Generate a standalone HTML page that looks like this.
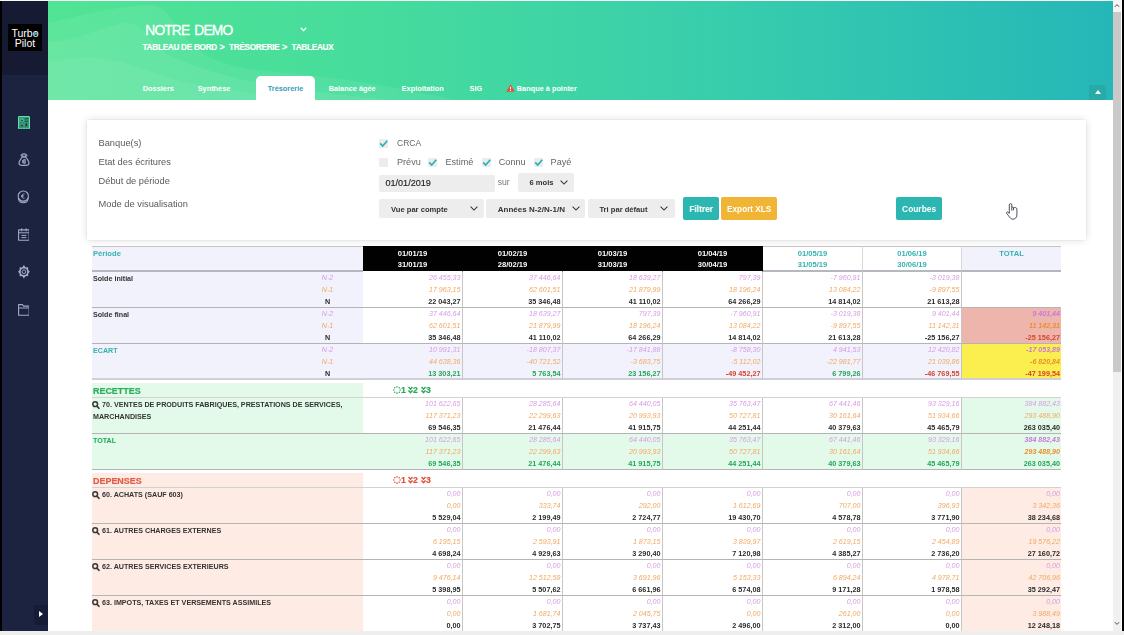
<!DOCTYPE html>
<html lang="fr">
<head>
<meta charset="utf-8">
<title>Turbo Pilot - Trésorerie</title>
<style>
*{box-sizing:border-box}
html,body{margin:0;padding:0}
body{width:1124px;height:635px;overflow:hidden;position:relative;background:#fff;font-family:"Liberation Sans",sans-serif;color:#333}
.abs{position:absolute}
#topline{left:0;top:0;width:1124px;height:1px;background:#fafafa}
#lblack{left:0;top:1px;width:2px;height:630px;background:#000}
#rblack{left:1122px;top:0;width:2px;height:631px;background:#000}
#side{left:2px;top:1px;width:46px;height:630px;background:#1c2340}
#sidetop{left:0;top:0;width:46px;height:74px;background:#171a33}
#logo{left:6px;top:23px;width:34px;height:27px;background:rgba(0,0,0,.997);color:#fff;font-size:10.5px;line-height:10.2px;text-align:center;padding-top:3.8px;letter-spacing:0}
#logo i{font-style:normal;position:relative}
#logo i:after{content:"";position:absolute;left:1.45px;top:5.1px;width:3px;height:3px;border-radius:50%;background:#2eb0e6}
#toggle{left:32px;top:604px;width:14px;height:20px;background:#161b36;border-radius:2px 0 0 2px}
#toggle:after{content:"";position:absolute;left:5px;top:6px;border-left:4px solid #fff;border-top:3.5px solid transparent;border-bottom:3.5px solid transparent}
.sic{position:absolute;left:15px;width:13px;height:14px}
#head{left:48px;top:1px;width:1065px;height:99px;background:linear-gradient(90deg,#51e494 0%,#46dc9c 30%,#3acfab 60%,#2cc0b4 85%,#25b7b7 100%);overflow:hidden}
#head svg.wv{position:absolute;left:0;top:0}
#title{left:97.3px;top:21.6px;font-size:13.8px;font-weight:normal;-webkit-text-stroke:.3px #fff;color:#fff;letter-spacing:-.85px;word-spacing:2px;white-space:nowrap}
#caret{left:252px;top:26px;width:7px;height:5px}
#crumb{left:94.5px;top:42px;line-height:10px;font-size:8.2px;letter-spacing:-.27px;font-weight:bold;color:#fff;-webkit-text-stroke:.15px #fff;white-space:nowrap}
#crumb b{font-weight:bold;font-size:9px;line-height:8px;position:relative;top:.3px;margin:0 2.5px 0 .5px}
.tab{position:absolute;top:83px;font-size:7.35px;font-weight:bold;color:#fff;white-space:nowrap;line-height:10px}
#tabact{left:208px;top:75px;width:59px;height:25px;background:#fff;border-radius:5px 5px 0 0;color:#3a9cbc;text-align:center;padding-top:8px}
#upbtn{left:1041px;top:84px;width:17px;height:15px;background:#28aaa9;border-radius:1px}
#upbtn:after{content:"";position:absolute;left:5.5px;top:5px;border-bottom:4px solid #fff;border-left:3.5px solid transparent;border-right:3.5px solid transparent}
#sb{left:1113px;top:0;width:8px;height:631px;background:#f0f0f0}
#sbthumb{left:0;top:12px;width:8px;height:360px;background:#c9c9c9}
#sbtop{left:0;top:0;width:8px;height:12px;background:#f4f4f4}
#bbar{left:0;top:631px;width:1124px;height:4px;background:#eeeeee}
#panel{left:87px;top:120px;width:999px;height:120px;background:#fff;box-shadow:0 0 9px rgba(0,0,0,.14),0 0 2px rgba(0,0,0,.10)}
.fl{position:absolute;left:11.5px;font-size:9.3px;color:#5a5a5a;white-space:nowrap;line-height:12px}
.cb{position:absolute;width:9px;height:9px;background:#ececec;border-radius:1px}
.cb svg{position:absolute;left:0;top:0;width:9px;height:9px}
.ct{position:absolute;font-size:9.1px;color:#666;white-space:nowrap;line-height:12px}
.inp{position:absolute;background:#ededed;border-radius:2px;font-weight:bold;font-size:7.6px;color:#333;white-space:nowrap}
.inp span{position:absolute}
.inp svg{position:absolute;width:8px;height:5px}
.btn{position:absolute;top:77px;height:23px;border-radius:2px;color:#fff;font-weight:bold;font-size:8.4px;line-height:24.2px;text-align:center;white-space:nowrap}
table{position:absolute;left:92px;top:246px;width:969px;border-collapse:separate;border-spacing:0;table-layout:fixed}
td,th{padding:0;margin:0;vertical-align:top;overflow:hidden}
th{height:26px;border-top:1px solid #c4c4c4;border-bottom:2px solid #b6b8bf;font-size:7.6px;line-height:11.5px;font-weight:bold;text-align:center;padding-top:0;color:#33b2ae;background:#fff;border-right:1px solid #d8d8d8}
th .hi{position:relative;top:.8px}
th.blk{background:#000;color:#fff;border-top-color:#000;border-right-color:#000;border-bottom:1px solid #fff}
th.per{text-align:left;padding-left:1px;background:#f1f2fb;border-right:none}
th.tt{background:#f1f2fb;border-right:none}
tr.dr td{height:36px;border-bottom:1px solid #b4b4b4}
td.lbl{font-size:7.15px;font-weight:bold;color:#333;line-height:12px;padding:1.3px 0 0 1px;white-space:nowrap}
td.nn{text-align:center;font-size:7.2px;line-height:11.85px;padding-top:.5px}
td.num{text-align:right;font-size:7.25px;line-height:11.85px;padding-right:1.5px;padding-top:.5px;border-right:1px solid #c6c6c6;white-space:nowrap}
td.num.tot{border-right:none;padding-right:1px}
.v2{font-style:italic;font-size:7.1px;color:#d79be4;height:12.4px}
.v1{font-style:italic;font-size:7.1px;color:#f0a961;height:11.3px}
.v0{font-weight:bold;color:#2b2b2b;height:10.8px}
.r-ec .v0{height:9.8px}
.pos{color:#1fa857}
.neg{color:#d8432e}
.r-si td.lbl,.r-si td.nn,.r-sf td.lbl,.r-sf td.nn{background:#f1f2fb}
.r-ec td{background:#f1f2fb}
tr.r-ec td{border-bottom:2px solid #cfcfd5}
td.lbl-teal{color:#33b2ae}
td.lbl-green{color:#1fa857}
td.t-sf{background:#eeb5ad}
.r-ec td.t-ec{background:#fbee4f}
td.tot .v2,td.tot .v1{font-weight:normal}
td.t-sf .v2,td.t-sf .v1,td.t-ec .v2,td.t-ec .v1,.g-tot td.tot .v2,.g-tot td.tot .v1{font-weight:bold}
td.t-sf .v2,td.t-ec .v2,.g-tot td.tot .v2{color:#c978dc}
td.t-sf .v1,td.t-ec .v1,.g-tot td.tot .v1{color:#ea8f2f}
tr.sec td{height:15px;border-bottom:1px solid #d2d2d2;font-weight:bold;font-size:8.7px;line-height:13px}
tr.sec td.lbl{font-size:8.95px;line-height:11px;padding-top:2.5px;-webkit-text-stroke:.2px}
tr.gap td{height:3px}
.s-rec td.lbl{background:#e3f9e9;color:#2aae5c}
.s-dep td.lbl{background:#fdebe4;color:#e15e47}
.s-rec td.ic{color:#2aa95a}
.s-dep td.ic{color:#e0523c}
td.ic{padding-left:30px;font-size:8.7px;white-space:nowrap}
.icw{position:relative;top:1.2px;display:inline-block;-webkit-text-stroke:.2px}
td.ic svg{vertical-align:-1.2px}
svg.spn{width:8px;height:8px}
svg.chv{width:5px;height:8px}
.g-rec td.lbl,.g-rec td.tot,.g-tot td{background:#e3f9e9}
.g-rec td{border-bottom-color:#a9c4b0}
.g-dep td.lbl,.g-dep td.tot{background:#fdebe4}
svg.mag{width:8px;height:8.5px;vertical-align:-2.6px;margin-left:-.8px;margin-right:-.2px}
#cursor{left:1006px;top:202.5px;width:12px;height:17px}
</style>
</head>
<body style="opacity:.999">
<div id="topline" class="abs"></div>
<div id="lblack" class="abs"></div>
<div id="rblack" class="abs"></div>

<div id="side" class="abs">
  <div id="sidetop" class="abs"></div>
  <div id="logo" class="abs">Turb<i>o</i><br>Pilot</div>

  <svg class="sic" style="left:15.6px;top:114.6px;width:12px;height:13.5px" viewBox="0 0 12 13.5"><rect x=".5" y=".5" width="11" height="12.5" rx=".3" fill="#46cf95" fill-opacity=".68" stroke="#5fe3a8" stroke-width="1"/><ellipse cx="4" cy="4.5" rx="1.25" ry="1.6" fill="#1c2340" fill-opacity=".9" stroke="#5fe3a8" stroke-width=".8"/><path d="M6.7 3.1 L10.3 2.6 M6.7 5.3 H10.2" stroke="#1c2340" stroke-opacity=".8" stroke-width=".9"/><rect x="7.5" y="7.3" width="1.6" height="3" fill="#1c2340" fill-opacity=".9"/><path d="M2.6 9.7 H5" stroke="#1c2340" stroke-opacity=".8" stroke-width="1.2"/><path d="M2.2 6.5 H5.6" stroke="#1c2340" stroke-opacity=".35" stroke-width=".7"/></svg>
  <svg class="sic" style="left:15.7px;top:151.8px;width:12px;height:13.2px" viewBox="0 0 13 14"><path d="M4.9 4 C2.8 6.4 1.1 8.8 1.1 10.8 C1.1 12.5 2.2 13.2 3.6 13.2 H9.4 C10.8 13.2 11.9 12.5 11.9 10.8 C11.9 8.8 10.2 6.4 8.1 4 Z" fill="none" stroke="#a3a9c6" stroke-width="1.25"/><path d="M3.2 2.5 C3.2 1.3 4.6 .7 6.5 .7 C8.4 .7 9.8 1.3 9.8 2.5 C9.8 3.5 8.6 3.9 6.5 3.9 C4.4 3.9 3.2 3.5 3.2 2.5 Z" fill="#a3a9c6" fill-opacity=".75" stroke="#a3a9c6" stroke-width=".9"/><ellipse cx="6.5" cy="2.4" rx=".8" ry="1" fill="#1c2340"/><path d="M7.9 6.9 C6.3 6.3 5 7.6 5 9.1 C5 10.6 6.3 11.7 7.9 11.2 Z M4.3 8.5 H6.8 M4.3 9.7 H6.8" fill="#a3a9c6" fill-opacity=".55" stroke="#a3a9c6" stroke-width=".9"/></svg>
  <svg class="sic" style="left:15.3px;top:189px;width:12.6px;height:13.6px" viewBox="0 0 13 14"><circle cx="6.5" cy="6.3" r="5.3" fill="none" stroke="#a3a9c6" stroke-width="1.15"/><path d="M1.3 8 C1.6 11.4 3.6 13.2 6.5 13.2 C9.4 13.2 11.4 11.4 11.7 8" fill="none" stroke="#a3a9c6" stroke-width="1.1"/><path d="M4.6 11.6 H8.4" stroke="#a3a9c6" stroke-width=".8"/><path d="M7.8 4.2 C6.2 3.6 5 4.8 5 6.3 C5 7.8 6.2 9 7.8 8.4 M4.2 5.7 H6.8 M4.2 6.9 H6.8" fill="none" stroke="#a3a9c6" stroke-width=".9"/></svg>
  <svg class="sic" style="left:15.7px;top:227.2px;width:11.8px;height:12.8px" viewBox="0 0 11.8 12.8"><rect x=".6" y="1.9" width="10.6" height="10.3" rx=".3" fill="none" stroke="#a3a9c6" stroke-width="1.1"/><path d="M.6 4.8 H11.2 M3.7 .3 V3.4 M8.1 .3 V3.4" stroke="#a3a9c6" stroke-width="1"/><path d="M3.4 7.4 H8.4 M3.4 9.6 H8.4" stroke="#a3a9c6" stroke-width="1"/></svg>
  <svg class="sic" style="left:15.8px;top:264px;width:11.8px;height:13.5px" viewBox="0 0 11.8 13.5"><path d="M5.90 0.05 L7.70 2.41 L10.07 2.30 L10.24 4.95 L11.80 6.75 L10.24 8.55 L10.07 11.20 L7.70 11.09 L5.90 13.45 L4.10 11.09 L1.73 11.20 L1.56 8.55 L0.00 6.75 L1.56 4.95 L1.73 2.30 L4.10 2.41 Z" fill="#a3a9c6"/><circle cx="5.9" cy="6.75" r="3.2" fill="#1c2340"/><circle cx="5.9" cy="6.75" r="1.8" fill="none" stroke="#a3a9c6" stroke-width="1"/></svg>
  <svg class="sic" style="left:15.7px;top:302.8px;width:11.8px;height:11.8px" viewBox="0 0 11.8 11.8"><path d="M.6 11.2 V.6 H4.4 L5.6 2.1 H11.2 V11.2 Z" fill="none" stroke="#a3a9c6" stroke-width="1.1" stroke-linejoin="round"/><path d="M.6 4 H11.2" stroke="#a3a9c6" stroke-width="1"/></svg>

  <div id="toggle" class="abs"></div>
</div>

<div id="head" class="abs">
  <svg class="wv" width="1065" height="99" viewBox="0 0 1065 99">
    <path d="M0 22 C20 18 60 6 100 4 C115 3 121 14 128 24 C140 40 150 52 170 60 C195 69 220 70 260 74 C320 80 360 90 410 99 L0 99 Z" fill="#fff" fill-opacity=".07"/>
    <path d="M0 41 C30 39 50 28 75 22 C90 19 100 35 110 46 C125 60 160 70 200 80 C240 88 290 93 340 99 L0 99 Z" fill="#fff" fill-opacity=".07"/>
    <path d="M0 60 C20 58 40 54 60 58 C90 64 110 76 150 84 C200 92 230 96 270 99 L0 99 Z" fill="#fff" fill-opacity=".06"/>
  </svg>
  <div id="title" class="abs">NOTRE DEMO</div>
  <svg id="caret" class="abs" viewBox="0 0 7 5"><path d="M0.8 0.8 L3.5 3.6 L6.2 0.8" fill="none" stroke="#fff" stroke-width="1.3"/></svg>
  <div id="crumb" class="abs">TABLEAU DE BORD <b>&gt;</b> TRÉSORERIE <b>&gt;</b> TABLEAUX</div>
  <div class="tab" style="left:94.8px">Dossiers</div>
  <div class="tab" style="left:149.7px">Synthèse</div>
  <div id="tabact" class="tab" style="top:75px">Trésorerie</div>
  <div class="tab" style="left:280.7px">Balance âgée</div>
  <div class="tab" style="left:353.7px">Exploitation</div>
  <div class="tab" style="left:421.5px">SIG</div>
  <svg class="abs" style="left:458px;top:83px;width:9px;height:8px" viewBox="0 0 9 8"><path d="M4.5 0.3 L8.8 7.7 L0.2 7.7 Z" fill="#e8503c"/><path d="M4.5 2.8 L4.5 5.2" stroke="#fff" stroke-width="1"/><circle cx="4.5" cy="6.4" r=".55" fill="#fff"/></svg>
  <div class="tab" style="left:468.8px">Banque à pointer</div>
  <div id="upbtn" class="abs"></div>
</div>

<div id="panel" class="abs">
  <div class="fl" style="top:17px">Banque(s)</div>
  <div class="fl" style="top:36px">Etat des écritures</div>
  <div class="fl" style="top:55px">Début de période</div>
  <div class="fl" style="top:77.5px">Mode de visualisation</div>

  <div class="cb" style="left:292px;top:19px"><svg viewBox="0 0 9 9"><path d="M1.2 4.3 L3.7 7 L8.3 1.8" fill="none" stroke="#2ab3b3" stroke-width="1.7"/></svg></div>
  <div class="ct" style="left:310px;top:17px;font-size:8.5px">CRCA</div>

  <div class="cb" style="left:292px;top:38px"></div>
  <div class="ct" style="left:310px;top:36px">Prévu</div>
  <div class="cb" style="left:341px;top:38px"><svg viewBox="0 0 9 9"><path d="M1.2 4.3 L3.7 7 L8.3 1.8" fill="none" stroke="#2ab3b3" stroke-width="1.7"/></svg></div>
  <div class="ct" style="left:358.5px;top:36px">Estimé</div>
  <div class="cb" style="left:394.5px;top:38px"><svg viewBox="0 0 9 9"><path d="M1.2 4.3 L3.7 7 L8.3 1.8" fill="none" stroke="#2ab3b3" stroke-width="1.7"/></svg></div>
  <div class="ct" style="left:411.8px;top:36px">Connu</div>
  <div class="cb" style="left:446.7px;top:38px"><svg viewBox="0 0 9 9"><path d="M1.2 4.3 L3.7 7 L8.3 1.8" fill="none" stroke="#2ab3b3" stroke-width="1.7"/></svg></div>
  <div class="ct" style="left:463.6px;top:36px">Payé</div>

  <div class="inp" style="left:292px;top:54.6px;width:116px;height:17.1px;font-weight:normal;font-size:9.1px;color:#222;-webkit-text-stroke:.15px #222"><span style="left:6.4px;top:3.2px">01/01/2019</span></div>
  <div class="ct" style="left:410.8px;top:55.7px;font-size:8.6px;color:#777">sur</div>
  <div class="inp" style="left:431px;top:53.1px;width:56px;height:18.7px"><span style="left:11.5px;top:4.8px">6 mois</span><svg style="left:41.7px;top:6.8px" viewBox="0 0 8 5"><path d="M0.6 0.6 L4 4 L7.4 0.6" fill="none" stroke="#333" stroke-width="1.05"/></svg></div>

  <div class="inp" style="left:292px;top:79.1px;width:105px;height:18.7px"><span style="left:12px;top:5.6px">Vue par compte</span><svg style="left:91px;top:7px" viewBox="0 0 8 5"><path d="M0.6 0.6 L4 4 L7.4 0.6" fill="none" stroke="#333" stroke-width="1.05"/></svg></div>
  <div class="inp" style="left:399.3px;top:79.1px;width:98.5px;height:18.7px"><span style="left:11.5px;top:5.9px;font-size:8px">Années N-2/N-1/N</span><svg style="left:85.4px;top:7px" viewBox="0 0 8 5"><path d="M0.6 0.6 L4 4 L7.4 0.6" fill="none" stroke="#333" stroke-width="1.05"/></svg></div>
  <div class="inp" style="left:501px;top:79.1px;width:86.6px;height:18.7px"><span style="left:11.4px;top:5.6px">Tri par défaut</span><svg style="left:72.4px;top:7px" viewBox="0 0 8 5"><path d="M0.6 0.6 L4 4 L7.4 0.6" fill="none" stroke="#333" stroke-width="1.05"/></svg></div>

  <div class="btn" style="left:596px;width:36px;background:#2bb6b2">Filtrer</div>
  <div class="btn" style="left:634.2px;width:56px;background:#f1b535;font-size:8.2px;line-height:25.2px">Export XLS</div>
  <div class="btn" style="left:809px;width:46.2px;background:#2bb6b2">Courbes</div>
</div>

<svg id="cursor" class="abs" viewBox="0 0 12 17"><path d="M3.3 10.4 V1.9 a1.25 1.25 0 0 1 2.5 0 V4.6 C6.6 3.6 7.4 3.9 7.5 4.9 C8.6 4.2 10.9 4.4 10.9 6.2 V12 C10.9 14.6 9 16.2 7 16.2 C5 16.2 3.8 14.6 2.6 12.8 L0.6 10.2 C0.2 9.4 1 8.6 1.8 9.1 Z" fill="#fff" stroke="#3c3c4a" stroke-width=".9" stroke-linejoin="round"/><path d="M5.8 4.4 V7.7 M7.5 4.9 V7.3" fill="none" stroke="#3c3c4a" stroke-width=".9"/></svg>

<table>
<colgroup><col style="width:200px"><col style="width:71px"><col style="width:100px"><col style="width:100px"><col style="width:100px"><col style="width:100px"><col style="width:100px"><col style="width:99px"><col style="width:99px"></colgroup>
<tr><th class="per" colspan="2"><div class="hi">Période</div></th><th class="blk"><div class="hi">01/01/19<br>31/01/19</div></th><th class="blk"><div class="hi">01/02/19<br>28/02/19</div></th><th class="blk"><div class="hi">01/03/19<br>31/03/19</div></th><th class="blk"><div class="hi">01/04/19<br>30/04/19</div></th><th><div class="hi">01/05/19<br>31/05/19</div></th><th><div class="hi">01/06/19<br>30/06/19</div></th><th class="tt"><div class="hi">TOTAL</div></th></tr>
<tr class="dr r-si"><td class="lbl lbl-dark">Solde initial</td><td class="nn"><div class="v2">N-2</div><div class="v1">N-1</div><div class="v0">N</div></td><td class="num "><div class="v2">26 455,33</div><div class="v1">17 963,15</div><div class="v0 ">22 043,27</div></td><td class="num "><div class="v2">37 446,64</div><div class="v1">62 601,51</div><div class="v0 ">35 346,48</div></td><td class="num "><div class="v2">18 639,27</div><div class="v1">21 879,99</div><div class="v0 ">41 110,02</div></td><td class="num "><div class="v2">797,39</div><div class="v1">18 196,24</div><div class="v0 ">64 266,29</div></td><td class="num "><div class="v2">-7 960,91</div><div class="v1">13 084,22</div><div class="v0 ">14 814,02</div></td><td class="num "><div class="v2">-3 019,38</div><div class="v1">-9 897,55</div><div class="v0 ">21 613,28</div></td><td class="num tot"><div class="v2"></div><div class="v1"></div><div class="v0 "></div></td></tr>
<tr class="dr r-sf"><td class="lbl lbl-dark">Solde final</td><td class="nn"><div class="v2">N-2</div><div class="v1">N-1</div><div class="v0">N</div></td><td class="num "><div class="v2">37 446,64</div><div class="v1">62 601,51</div><div class="v0 ">35 346,48</div></td><td class="num "><div class="v2">18 639,27</div><div class="v1">21 879,99</div><div class="v0 ">41 110,02</div></td><td class="num "><div class="v2">797,39</div><div class="v1">18 196,24</div><div class="v0 ">64 266,29</div></td><td class="num "><div class="v2">-7 960,91</div><div class="v1">13 084,22</div><div class="v0 ">14 814,02</div></td><td class="num "><div class="v2">-3 019,38</div><div class="v1">-9 897,55</div><div class="v0 ">21 613,28</div></td><td class="num "><div class="v2">9 401,44</div><div class="v1">11 142,31</div><div class="v0 ">-25 156,27</div></td><td class="num tot t-sf"><div class="v2">9 401,44</div><div class="v1">11 142,31</div><div class="v0 neg">-25 156,27</div></td></tr>
<tr class="dr r-ec"><td class="lbl lbl-teal">ECART</td><td class="nn"><div class="v2">N-2</div><div class="v1">N-1</div><div class="v0">N</div></td><td class="num "><div class="v2">10 991,31</div><div class="v1">44 638,36</div><div class="v0 pos">13 303,21</div></td><td class="num "><div class="v2">-18 807,37</div><div class="v1">-40 721,52</div><div class="v0 pos">5 763,54</div></td><td class="num "><div class="v2">-17 841,88</div><div class="v1">-3 683,75</div><div class="v0 pos">23 156,27</div></td><td class="num "><div class="v2">-8 758,30</div><div class="v1">-5 112,02</div><div class="v0 neg">-49 452,27</div></td><td class="num "><div class="v2">4 941,53</div><div class="v1">-22 981,77</div><div class="v0 pos">6 799,26</div></td><td class="num "><div class="v2">12 420,82</div><div class="v1">21 039,86</div><div class="v0 neg">-46 769,55</div></td><td class="num tot t-ec"><div class="v2">-17 053,89</div><div class="v1">-6 820,84</div><div class="v0 neg">-47 199,54</div></td></tr>
<tr class="gap"><td colspan="9"></td></tr>
<tr class="sec s-rec"><td class="lbl" colspan="2">RECETTES</td><td colspan="7" class="ic"><span class="icw"><svg class="spn" viewBox="0 0 8 8"><circle cx="7.15" cy="4.00" r=".78" fill="#2aa95a"/><circle cx="6.23" cy="6.23" r=".78" fill="#2aa95a"/><circle cx="4.00" cy="7.15" r=".78" fill="#2aa95a"/><circle cx="1.77" cy="6.23" r=".78" fill="#2aa95a"/><circle cx="0.85" cy="4.00" r=".78" fill="#2aa95a"/><circle cx="1.77" cy="1.77" r=".78" fill="#2aa95a"/><circle cx="4.00" cy="0.85" r=".78" fill="#2aa95a"/><circle cx="6.23" cy="1.77" r=".78" fill="#2aa95a"/></svg><span>1</span><i style="margin-left:2.2px"></i><svg class="chv" viewBox="0 0 5 8"><path d="M0.5 1 L2.5 3.2 L4.5 1 M0.5 4.4 L2.5 6.6 L4.5 4.4" fill="none" stroke="#2aa95a" stroke-width="1.5"/></svg><span>2</span><i style="margin-left:3.2px"></i><svg class="chv" viewBox="0 0 5 8"><path d="M0.5 1 L2.5 3.2 L4.5 1 M0.5 4.4 L2.5 6.6 L4.5 4.4" fill="none" stroke="#2aa95a" stroke-width="1.5"/></svg><span>3</span></span></td></tr>
<tr class="dr g-rec"><td class="lbl" colspan="2"><svg class="mag" viewBox="0 0 16 17"><circle cx="6.4" cy="6.4" r="4.7" fill="none" stroke="#383838" stroke-width="3"/><path d="M10.2 10.4 L13.8 14.6" stroke="#383838" stroke-width="3.4" stroke-linecap="round"/></svg> 70. VENTES DE PRODUITS FABRIQUES, PRESTATIONS DE SERVICES,<br>MARCHANDISES</td><td class="num "><div class="v2">101 622,65</div><div class="v1">117 371,23</div><div class="v0 ">69 546,35</div></td><td class="num "><div class="v2">28 285,64</div><div class="v1">22 299,63</div><div class="v0 ">21 476,44</div></td><td class="num "><div class="v2">64 440,05</div><div class="v1">20 993,93</div><div class="v0 ">41 915,75</div></td><td class="num "><div class="v2">35 763,47</div><div class="v1">50 727,81</div><div class="v0 ">44 251,44</div></td><td class="num "><div class="v2">67 441,46</div><div class="v1">30 161,64</div><div class="v0 ">40 379,63</div></td><td class="num "><div class="v2">93 329,16</div><div class="v1">51 934,66</div><div class="v0 ">45 465,79</div></td><td class="num tot"><div class="v2">384 882,43</div><div class="v1">293 488,90</div><div class="v0 ">263 035,40</div></td></tr>
<tr class="dr g-rec g-tot"><td class="lbl lbl-green" colspan="2">TOTAL</td><td class="num "><div class="v2">101 622,65</div><div class="v1">117 371,23</div><div class="v0 pos">69 546,35</div></td><td class="num "><div class="v2">28 285,64</div><div class="v1">22 299,63</div><div class="v0 pos">21 476,44</div></td><td class="num "><div class="v2">64 440,05</div><div class="v1">20 993,93</div><div class="v0 pos">41 915,75</div></td><td class="num "><div class="v2">35 763,47</div><div class="v1">50 727,81</div><div class="v0 pos">44 251,44</div></td><td class="num "><div class="v2">67 441,46</div><div class="v1">30 161,64</div><div class="v0 pos">40 379,63</div></td><td class="num "><div class="v2">93 329,16</div><div class="v1">51 934,66</div><div class="v0 pos">45 465,79</div></td><td class="num tot"><div class="v2">384 882,43</div><div class="v1">293 488,90</div><div class="v0 pos">263 035,40</div></td></tr>
<tr class="gap"><td colspan="9"></td></tr>
<tr class="sec s-dep"><td class="lbl" colspan="2">DEPENSES</td><td colspan="7" class="ic"><span class="icw"><svg class="spn" viewBox="0 0 8 8"><circle cx="7.15" cy="4.00" r=".78" fill="#e0523c"/><circle cx="6.23" cy="6.23" r=".78" fill="#e0523c"/><circle cx="4.00" cy="7.15" r=".78" fill="#e0523c"/><circle cx="1.77" cy="6.23" r=".78" fill="#e0523c"/><circle cx="0.85" cy="4.00" r=".78" fill="#e0523c"/><circle cx="1.77" cy="1.77" r=".78" fill="#e0523c"/><circle cx="4.00" cy="0.85" r=".78" fill="#e0523c"/><circle cx="6.23" cy="1.77" r=".78" fill="#e0523c"/></svg><span>1</span><i style="margin-left:2.2px"></i><svg class="chv" viewBox="0 0 5 8"><path d="M0.5 1 L2.5 3.2 L4.5 1 M0.5 4.4 L2.5 6.6 L4.5 4.4" fill="none" stroke="#e0523c" stroke-width="1.5"/></svg><span>2</span><i style="margin-left:3.2px"></i><svg class="chv" viewBox="0 0 5 8"><path d="M0.5 1 L2.5 3.2 L4.5 1 M0.5 4.4 L2.5 6.6 L4.5 4.4" fill="none" stroke="#e0523c" stroke-width="1.5"/></svg><span>3</span></span></td></tr>
<tr class="dr g-dep"><td class="lbl" colspan="2"><svg class="mag" viewBox="0 0 16 17"><circle cx="6.4" cy="6.4" r="4.7" fill="none" stroke="#383838" stroke-width="3"/><path d="M10.2 10.4 L13.8 14.6" stroke="#383838" stroke-width="3.4" stroke-linecap="round"/></svg> 60. ACHATS (SAUF 603)</td><td class="num "><div class="v2">0,00</div><div class="v1">0,00</div><div class="v0 ">5 529,04</div></td><td class="num "><div class="v2">0,00</div><div class="v1">333,74</div><div class="v0 ">2 199,49</div></td><td class="num "><div class="v2">0,00</div><div class="v1">292,00</div><div class="v0 ">2 724,77</div></td><td class="num "><div class="v2">0,00</div><div class="v1">1 612,69</div><div class="v0 ">19 430,70</div></td><td class="num "><div class="v2">0,00</div><div class="v1">707,00</div><div class="v0 ">4 578,78</div></td><td class="num "><div class="v2">0,00</div><div class="v1">396,93</div><div class="v0 ">3 771,90</div></td><td class="num tot"><div class="v2">0,00</div><div class="v1">3 342,36</div><div class="v0 ">38 234,68</div></td></tr>
<tr class="dr g-dep"><td class="lbl" colspan="2"><svg class="mag" viewBox="0 0 16 17"><circle cx="6.4" cy="6.4" r="4.7" fill="none" stroke="#383838" stroke-width="3"/><path d="M10.2 10.4 L13.8 14.6" stroke="#383838" stroke-width="3.4" stroke-linecap="round"/></svg> 61. AUTRES CHARGES EXTERNES</td><td class="num "><div class="v2">0,00</div><div class="v1">6 195,15</div><div class="v0 ">4 698,24</div></td><td class="num "><div class="v2">0,00</div><div class="v1">2 593,91</div><div class="v0 ">4 929,63</div></td><td class="num "><div class="v2">0,00</div><div class="v1">1 873,15</div><div class="v0 ">3 290,40</div></td><td class="num "><div class="v2">0,00</div><div class="v1">3 839,97</div><div class="v0 ">7 120,98</div></td><td class="num "><div class="v2">0,00</div><div class="v1">2 619,15</div><div class="v0 ">4 385,27</div></td><td class="num "><div class="v2">0,00</div><div class="v1">2 454,89</div><div class="v0 ">2 736,20</div></td><td class="num tot"><div class="v2">0,00</div><div class="v1">19 576,22</div><div class="v0 ">27 160,72</div></td></tr>
<tr class="dr g-dep"><td class="lbl" colspan="2"><svg class="mag" viewBox="0 0 16 17"><circle cx="6.4" cy="6.4" r="4.7" fill="none" stroke="#383838" stroke-width="3"/><path d="M10.2 10.4 L13.8 14.6" stroke="#383838" stroke-width="3.4" stroke-linecap="round"/></svg> 62. AUTRES SERVICES EXTERIEURS</td><td class="num "><div class="v2">0,00</div><div class="v1">9 476,14</div><div class="v0 ">5 398,95</div></td><td class="num "><div class="v2">0,00</div><div class="v1">12 512,58</div><div class="v0 ">5 507,62</div></td><td class="num "><div class="v2">0,00</div><div class="v1">3 691,96</div><div class="v0 ">6 661,96</div></td><td class="num "><div class="v2">0,00</div><div class="v1">5 153,33</div><div class="v0 ">6 574,08</div></td><td class="num "><div class="v2">0,00</div><div class="v1">6 894,24</div><div class="v0 ">9 171,28</div></td><td class="num "><div class="v2">0,00</div><div class="v1">4 978,71</div><div class="v0 ">1 978,58</div></td><td class="num tot"><div class="v2">0,00</div><div class="v1">42 706,96</div><div class="v0 ">35 292,47</div></td></tr>
<tr class="dr g-dep"><td class="lbl" colspan="2"><svg class="mag" viewBox="0 0 16 17"><circle cx="6.4" cy="6.4" r="4.7" fill="none" stroke="#383838" stroke-width="3"/><path d="M10.2 10.4 L13.8 14.6" stroke="#383838" stroke-width="3.4" stroke-linecap="round"/></svg> 63. IMPOTS, TAXES ET VERSEMENTS ASSIMILES</td><td class="num "><div class="v2">0,00</div><div class="v1">0,00</div><div class="v0 ">0,00</div></td><td class="num "><div class="v2">0,00</div><div class="v1">1 681,74</div><div class="v0 ">3 702,75</div></td><td class="num "><div class="v2">0,00</div><div class="v1">2 045,75</div><div class="v0 ">3 737,43</div></td><td class="num "><div class="v2">0,00</div><div class="v1">0,00</div><div class="v0 ">2 496,00</div></td><td class="num "><div class="v2">0,00</div><div class="v1">261,00</div><div class="v0 ">2 312,00</div></td><td class="num "><div class="v2">0,00</div><div class="v1">0,00</div><div class="v0 ">0,00</div></td><td class="num tot"><div class="v2">0,00</div><div class="v1">3 988,49</div><div class="v0 ">12 248,18</div></td></tr>
</table>

<div id="sb" class="abs"><div id="sbthumb" class="abs"></div><div id="sbtop" class="abs"></div>
<svg class="abs" style="left:1px;top:3px;width:6px;height:5px" viewBox="0 0 6 5"><path d="M0.9 3.8 L3 1.6 L5.1 3.8" fill="none" stroke="#505050" stroke-width="1"/></svg>
<svg class="abs" style="left:1px;top:621px;width:6px;height:5px" viewBox="0 0 6 5"><path d="M0.9 1.2 L3 3.4 L5.1 1.2" fill="none" stroke="#505050" stroke-width="1"/></svg>
</div>
<div id="bbar" class="abs"></div>
</body>
</html>
